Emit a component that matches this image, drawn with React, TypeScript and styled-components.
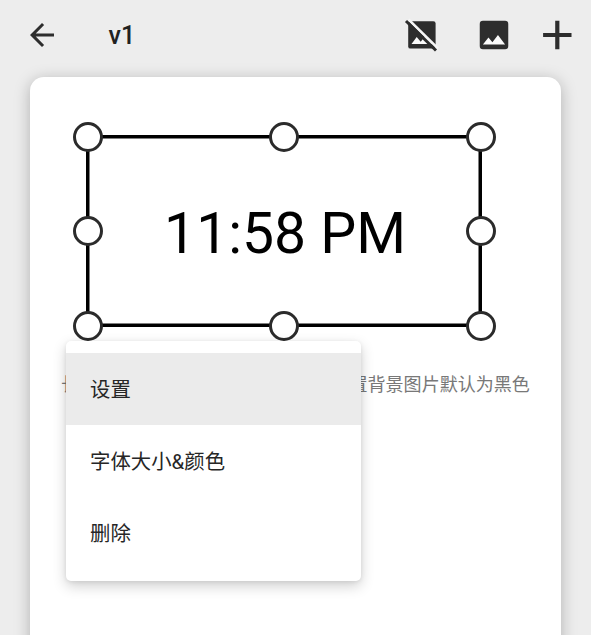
import React from "react";
import styled, { createGlobalStyle } from "styled-components";

const Global = createGlobalStyle`
  * { box-sizing: border-box; }
  html, body { margin: 0; overflow: hidden; background: #ededed; }
  body { font-family: Roboto, "Noto Sans CJK SC", sans-serif; }
`;

const Screen = styled.div`
  display: flex;
  flex-direction: column;
  width: 591px;
  height: 635px;
  overflow: hidden;
  background: #ededed;
`;

const Toolbar = styled.header`
  display: flex;
  flex: none;
  align-items: center;
  height: 76.5px;
  padding: 0 15px 7.5px 24px;
  color: #2d2d2d;
`;

const IconButton = styled.button<{ $gap?: number }>`
  display: flex;
  flex: none;
  margin: 0 0 0 ${(p) => p.$gap ?? 0}px;
  padding: 0;
  border: 0;
  background: none;
  color: inherit;
`;

const Title = styled.h1`
  flex: 1;
  margin: 3px 0 0 48.5px;
  font-size: 25px;
  font-weight: 500;
  line-height: 30px;
  color: #212121;
`;

const Card = styled.main`
  flex: none;
  width: 531px;
  height: 600px;
  margin-left: 30px;
  padding: 58px 31px 0 56px;
  border-radius: 14px;
  background: #fff;
  box-shadow: 0 3px 16px rgba(0, 0, 0, 0.26);
`;

const Selection = styled.section`
  position: relative;
  display: flex;
  align-items: center;
  justify-content: center;
  width: 396px;
  height: 192.5px;
  box-shadow: inset 0 0 0 3.5px #000;
`;

const Time = styled.span`
  padding: 7px 0 0 2px;
  font-size: 57px;
  line-height: 64px;
  color: #000;
  white-space: nowrap;
`;

const Handle = styled.i<{ $x: number; $y: number }>`
  position: absolute;
  left: calc(2px + (100% - 3.5px) * ${(p) => p.$x});
  top: calc(2px + (100% - 3.5px) * ${(p) => p.$y});
  width: 30px;
  height: 30px;
  transform: translate(-50%, -50%);
  border: 3px solid #2b2b2b;
  border-radius: 50%;
  background: #fff;
`;

const Hint = styled.p`
  margin: 43.5px 0 0 -25px;
  font-size: 18.04px;
  line-height: 27px;
  color: #787878;
  white-space: nowrap;
`;

const Menu = styled.ul`
  position: absolute;
  z-index: 2;
  top: 341px;
  left: 66px;
  width: 294.5px;
  margin: 0;
  padding: 12px 0;
  list-style: none;
  border-radius: 5px;
  background: #fff;
  box-shadow: 0 5px 14px rgba(0, 0, 0, 0.19), 0 1px 4px rgba(0, 0, 0, 0.08);
`;

const MenuItem = styled.li<{ $active?: boolean }>`
  display: flex;
  align-items: center;
  height: 72px;
  padding: 0 24px 2px;
  font-size: 20.4px;
  color: #262626;
  background: ${(p) => (p.$active ? "#ebebeb" : "transparent")};
`;

const handles = [
  [0, 0], [0.5, 0], [1, 0],
  [0, 0.5], [1, 0.5],
  [0, 1], [0.5, 1], [1, 1],
];

const BackIcon = () => (
  <svg width="36" height="36" viewBox="0 0 24 24" fill="currentColor">
    <path d="M20 11H7.83l5.59-5.59L12 4l-8 8 8 8 1.41-1.41L7.83 13H20v-2z" />
  </svg>
);

const ImageIcon = () => (
  <svg width="38" height="38" viewBox="0 0 24 24">
    <rect x="3" y="3" width="18" height="18" rx="2" fill="currentColor" />
    <path d="M8.5 13.5l2.5 3.01L14.5 12l4.5 6H5l3.5-4.5z" fill="#fafafa" />
  </svg>
);

const ImageOffIcon = () => (
  <svg width="38" height="38" viewBox="0 0 38 38">
    <rect x="5.2" y="5.2" width="27.4" height="27.4" rx="2.2" fill="#2d2d2d" />
    <path d="M8.5 28l5.2-7 4 4.7 5-6.3 7 8.6z" fill="#fafafa" />
    <path d="M5.5 3.5L35 32.5" stroke="#f6f6f6" strokeWidth="2.6" />
    <path d="M3 5L33 34.5" stroke="#2d2d2d" strokeWidth="3" />
  </svg>
);

const PlusIcon = () => (
  <svg width="38" height="38" viewBox="0 0 38 38">
    <path d="M19.3 4.8v28.4M5.1 19h28.4" stroke="currentColor" strokeWidth="4.2" />
  </svg>
);

export default function App() {
  return (
    <>
      <Global />
      <Screen>
        <Toolbar>
          <IconButton aria-label="返回"><BackIcon /></IconButton>
          <Title>v1</Title>
          <IconButton aria-label="移除背景"><ImageOffIcon /></IconButton>
          <IconButton aria-label="背景图片" $gap={34}><ImageIcon /></IconButton>
          <IconButton aria-label="添加" $gap={25}><PlusIcon /></IconButton>
        </Toolbar>
        <Card>
          <Selection>
            <Time>11:58 PM</Time>
            {handles.map(([x, y]) => (
              <Handle key={`${x}-${y}`} $x={x} $y={y} />
            ))}
          </Selection>
          <Hint>长按控件可以进行编辑和删除，未设置背景图片默认为黑色</Hint>
        </Card>
        <Menu>
          <MenuItem $active>设置</MenuItem>
          <MenuItem>字体大小&amp;颜色</MenuItem>
          <MenuItem>删除</MenuItem>
        </Menu>
      </Screen>
    </>
  );
}
